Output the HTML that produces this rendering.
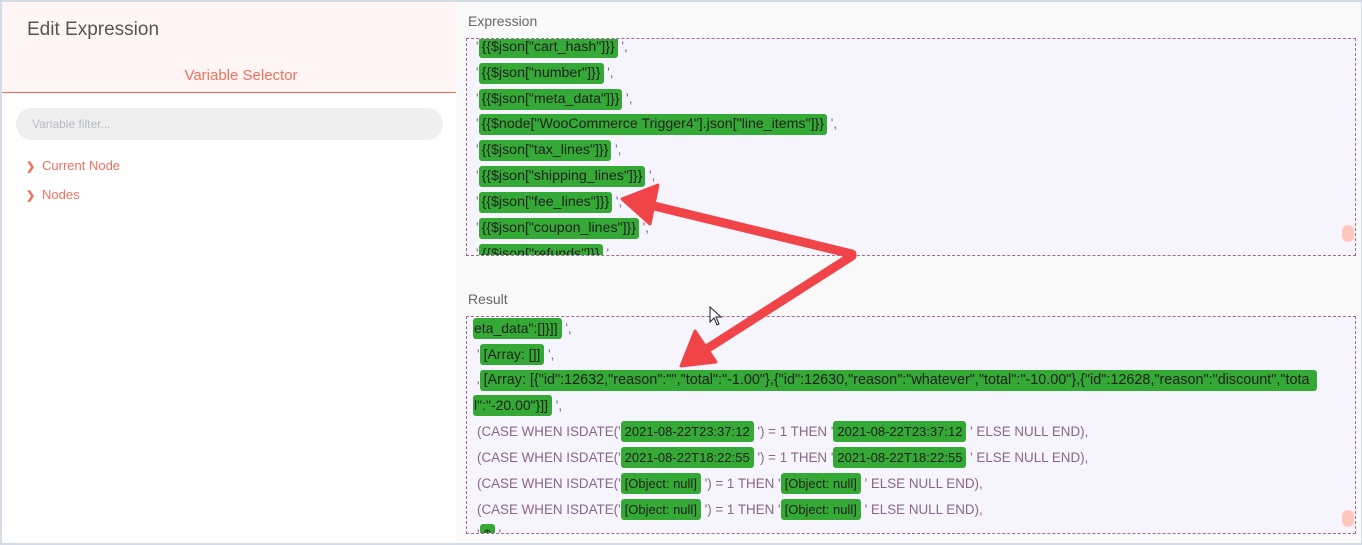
<!DOCTYPE html>
<html><head><meta charset="utf-8"><style>
*{margin:0;padding:0;box-sizing:border-box}
body{width:1362px;height:545px;overflow:hidden;background:#fff;font-family:"Liberation Sans",Arial,sans-serif;position:relative}
.frame{position:absolute;left:0;top:0;width:1362px;height:545px;border:2px solid #d3dbe4;border-right-width:1px;border-bottom-width:2px}
.left{position:absolute;left:2px;top:2px;width:454px;height:541px;background:#fff}
.hdr{position:absolute;left:0;top:0;width:454px;height:91px;background:#fff5f4;border-bottom:1px solid #f16a5a}
.title{position:absolute;left:25px;top:17px;font-size:19px;color:#555}
.vs{position:absolute;left:0;width:478px;top:65px;text-align:center;font-size:15px;color:#f0705e}
.filter{position:absolute;left:14px;top:106px;width:427px;height:32px;border-radius:16px;background:#efefef;font-size:12px;color:#b9bcc4;padding:9px 16px}
.item{position:absolute;left:24px;font-size:13px;color:#f0705e}
.item b{display:inline-block;width:16px;font-size:11px}
.right{position:absolute;left:456px;top:2px;width:905px;height:541px;background:#f9f9f9}
.lbl{position:absolute;left:468px;font-size:14px;color:#666}
.box{position:absolute;left:466px;width:890px;background:#f6f4fd;border:1px dashed #a06a96;overflow:hidden}
.ln{position:absolute;white-space:nowrap;font-size:13.4px;color:#8a668a;height:22px;line-height:22px}
.g{background:#35a935;color:#222;padding:0 4px;border-radius:3px;display:inline-block;height:21px;line-height:21px;font-size:13px}
.ex .g{font-size:14.2px;padding:0 3px}
.knob{position:absolute;width:12px;height:17px;border-radius:6px;background:#ffc6bc}
</style></head><body>
<div class="frame"></div>
<div class="left">
<div class="hdr"><div class="title">Edit Expression</div><div class="vs">Variable Selector</div></div>
<div class="filter">Variable filter...</div>
<div class="item" style="top:156px"><b>&#x276F;</b>Current Node</div>
<div class="item" style="top:185px"><b>&#x276F;</b>Nodes</div>
</div>
<div class="right"></div>
<div class="lbl" style="top:13px">Expression</div>
<div class="box ex" style="top:38px;height:218px">
<div class="ln" style="left:9px;top:-3px">'<span class="g">{{$json["cart_hash"]}}</span> ',</div>
<div class="ln" style="left:9px;top:23px">'<span class="g">{{$json["number"]}}</span> ',</div>
<div class="ln" style="left:9px;top:49px">'<span class="g">{{$json["meta_data"]}}</span> ',</div>
<div class="ln" style="left:9px;top:74px">'<span class="g">{{$node["WooCommerce Trigger4"].json["line_items"]}}</span> ',</div>
<div class="ln" style="left:9px;top:100px">'<span class="g">{{$json["tax_lines"]}}</span> ',</div>
<div class="ln" style="left:9px;top:126px">'<span class="g">{{$json["shipping_lines"]}}</span> ',</div>
<div class="ln" style="left:9px;top:152px">'<span class="g">{{$json["fee_lines"]}}</span> ',</div>
<div class="ln" style="left:9px;top:178px">'<span class="g">{{$json["coupon_lines"]}}</span> ',</div>
<div class="ln" style="left:9px;top:204px">'<span class="g">{{$json["refunds"]}}</span> ',</div>
<div class="knob" style="left:875px;top:186px"></div>
</div>
<div class="lbl" style="top:291px">Result</div>
<div class="box" style="top:316px;height:218px">
<div class="ln" style="left:6px;top:1px"><span class="g" style="padding-left:1px;font-size:14px">eta_data":[]}]]</span> ',</div>
<div class="ln" style="left:10px;top:27px">'<span class="g" style="font-size:14px">[Array: []]</span> ',</div>
<div class="ln" style="left:10px;top:53px">'<span class="g" style="width:837px;font-size:14.4px;overflow:hidden">[Array: [{"id":12632,"reason":"","total":"-1.00"},{"id":12630,"reason":"whatever","total":"-10.00"},{"id":12628,"reason":"discount","tota</span></div>
<div class="ln" style="left:6px;top:78px"><span class="g" style="padding-left:1px;font-size:14px">l":"-20.00"}]]</span> ',</div>
<div class="ln" style="left:10px;top:104px">(CASE WHEN ISDATE('<span class="g">2021-08-22T23:37:12</span> ') = 1 THEN '<span class="g">2021-08-22T23:37:12</span> ' ELSE NULL END),</div>
<div class="ln" style="left:10px;top:130px">(CASE WHEN ISDATE('<span class="g">2021-08-22T18:22:55</span> ') = 1 THEN '<span class="g">2021-08-22T18:22:55</span> ' ELSE NULL END),</div>
<div class="ln" style="left:10px;top:156px">(CASE WHEN ISDATE('<span class="g">[Object: null]</span> ') = 1 THEN '<span class="g">[Object: null]</span> ' ELSE NULL END),</div>
<div class="ln" style="left:10px;top:182px">(CASE WHEN ISDATE('<span class="g">[Object: null]</span> ') = 1 THEN '<span class="g">[Object: null]</span> ' ELSE NULL END),</div>
<div class="ln" style="left:10px;top:207px">'<span class="g">$</span> ',</div>
<div class="knob" style="left:875px;top:193px"></div>
</div>
<svg style="position:absolute;left:0;top:0" width="1362" height="545">
<g fill="#f04448" stroke="#f04448" stroke-linejoin="round">
<line x1="852" y1="254" x2="650" y2="205" stroke-width="9" stroke-linecap="round"/>
<polygon points="622,199 658,185 650,224" stroke-width="3"/>
<line x1="852" y1="256" x2="705" y2="350" stroke-width="9" stroke-linecap="round"/>
<polygon points="681,366 695,331 716,362" stroke-width="3"/>
</g>
<path d="M710 307 L710 322 L714 318 L717 325 L719 324 L716 317 L721 317 Z" fill="#fff" stroke="#222" stroke-width="1"/>
</svg>
</body></html>
